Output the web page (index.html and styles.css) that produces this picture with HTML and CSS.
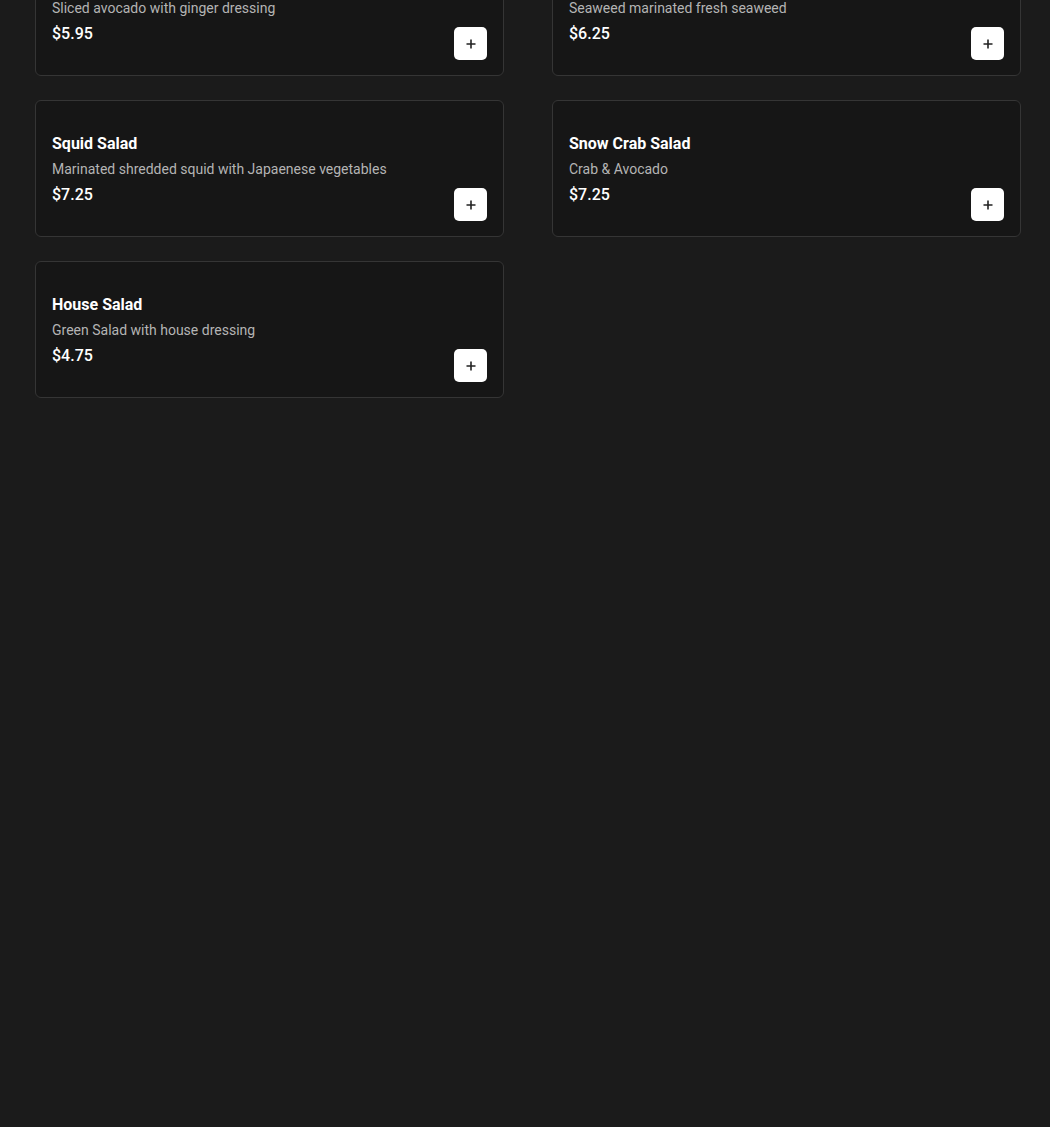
FILE: index.html
```html
<!DOCTYPE html>
<html lang="en">
<head>
  <meta charset="UTF-8">
  <title>Salads</title>
  <link rel="stylesheet" href="styles.css">
</head>
<body>
  <div class="menu-grid">
    <div class="item-card">
      <div class="item-info">
        <div class="item-name">Avocado Salad</div>
        <div class="item-desc">Sliced avocado with ginger dressing</div>
        <div class="item-price">$5.95</div>
      </div>
      <button class="add-btn" aria-label="Add">
        <svg width="12" height="12" viewBox="0 0 12 12"><path d="M6 1.5v9M1.5 6h9" stroke="#222" stroke-width="1.6" fill="none"/></svg>
      </button>
    </div>
    <div class="item-card">
      <div class="item-info">
        <div class="item-name">Seaweed Salad</div>
        <div class="item-desc">Seaweed marinated fresh seaweed</div>
        <div class="item-price">$6.25</div>
      </div>
      <button class="add-btn" aria-label="Add">
        <svg width="12" height="12" viewBox="0 0 12 12"><path d="M6 1.5v9M1.5 6h9" stroke="#222" stroke-width="1.6" fill="none"/></svg>
      </button>
    </div>
    <div class="item-card">
      <div class="item-info">
        <div class="item-name">Squid Salad</div>
        <div class="item-desc">Marinated shredded squid with Japaenese vegetables</div>
        <div class="item-price">$7.25</div>
      </div>
      <button class="add-btn" aria-label="Add">
        <svg width="12" height="12" viewBox="0 0 12 12"><path d="M6 1.5v9M1.5 6h9" stroke="#222" stroke-width="1.6" fill="none"/></svg>
      </button>
    </div>
    <div class="item-card">
      <div class="item-info">
        <div class="item-name">Snow Crab Salad</div>
        <div class="item-desc">Crab &amp; Avocado</div>
        <div class="item-price">$7.25</div>
      </div>
      <button class="add-btn" aria-label="Add">
        <svg width="12" height="12" viewBox="0 0 12 12"><path d="M6 1.5v9M1.5 6h9" stroke="#222" stroke-width="1.6" fill="none"/></svg>
      </button>
    </div>
    <div class="item-card">
      <div class="item-info">
        <div class="item-name">House Salad</div>
        <div class="item-desc">Green Salad with house dressing</div>
        <div class="item-price">$4.75</div>
      </div>
      <button class="add-btn" aria-label="Add">
        <svg width="12" height="12" viewBox="0 0 12 12"><path d="M6 1.5v9M1.5 6h9" stroke="#222" stroke-width="1.6" fill="none"/></svg>
      </button>
    </div>
  </div>
</body>
</html>
```

FILE: styles.css
```css
html, body {
  height: 100%;
}
body {
  margin: 0;
  background: #1b1b1b;
  font-family: Roboto, "Liberation Sans", sans-serif;
  color: #fff;
  overflow: hidden;
}
.menu-grid {
  display: grid;
  grid-template-columns: 469px 469px;
  column-gap: 48px;
  row-gap: 24px;
  padding: 0 35px;
  margin-top: -61px;
}
.item-card {
  display: flex;
  align-items: flex-end;
  justify-content: space-between;
  height: 137px;
  box-sizing: border-box;
  padding: 16px;
  background: #161616;
  border: 1px solid #353535;
  border-radius: 6px;
}
.item-info {
  padding-bottom: 13px;
}
.item-name {
  font-size: 16px;
  font-weight: 700;
  line-height: 24px;
  margin-bottom: 3px;
}
.item-desc {
  font-size: 14px;
  line-height: 20px;
  color: #b4b4b4;
}
.item-price {
  font-size: 16px;
  font-weight: 500;
  line-height: 24px;
  margin-top: 4px;
}
.add-btn {
  width: 33px;
  height: 33px;
  margin-bottom: -1px;
  padding: 0;
  border: none;
  border-radius: 5px;
  background: #fff;
  display: flex;
  align-items: center;
  justify-content: center;
  cursor: pointer;
}
```
